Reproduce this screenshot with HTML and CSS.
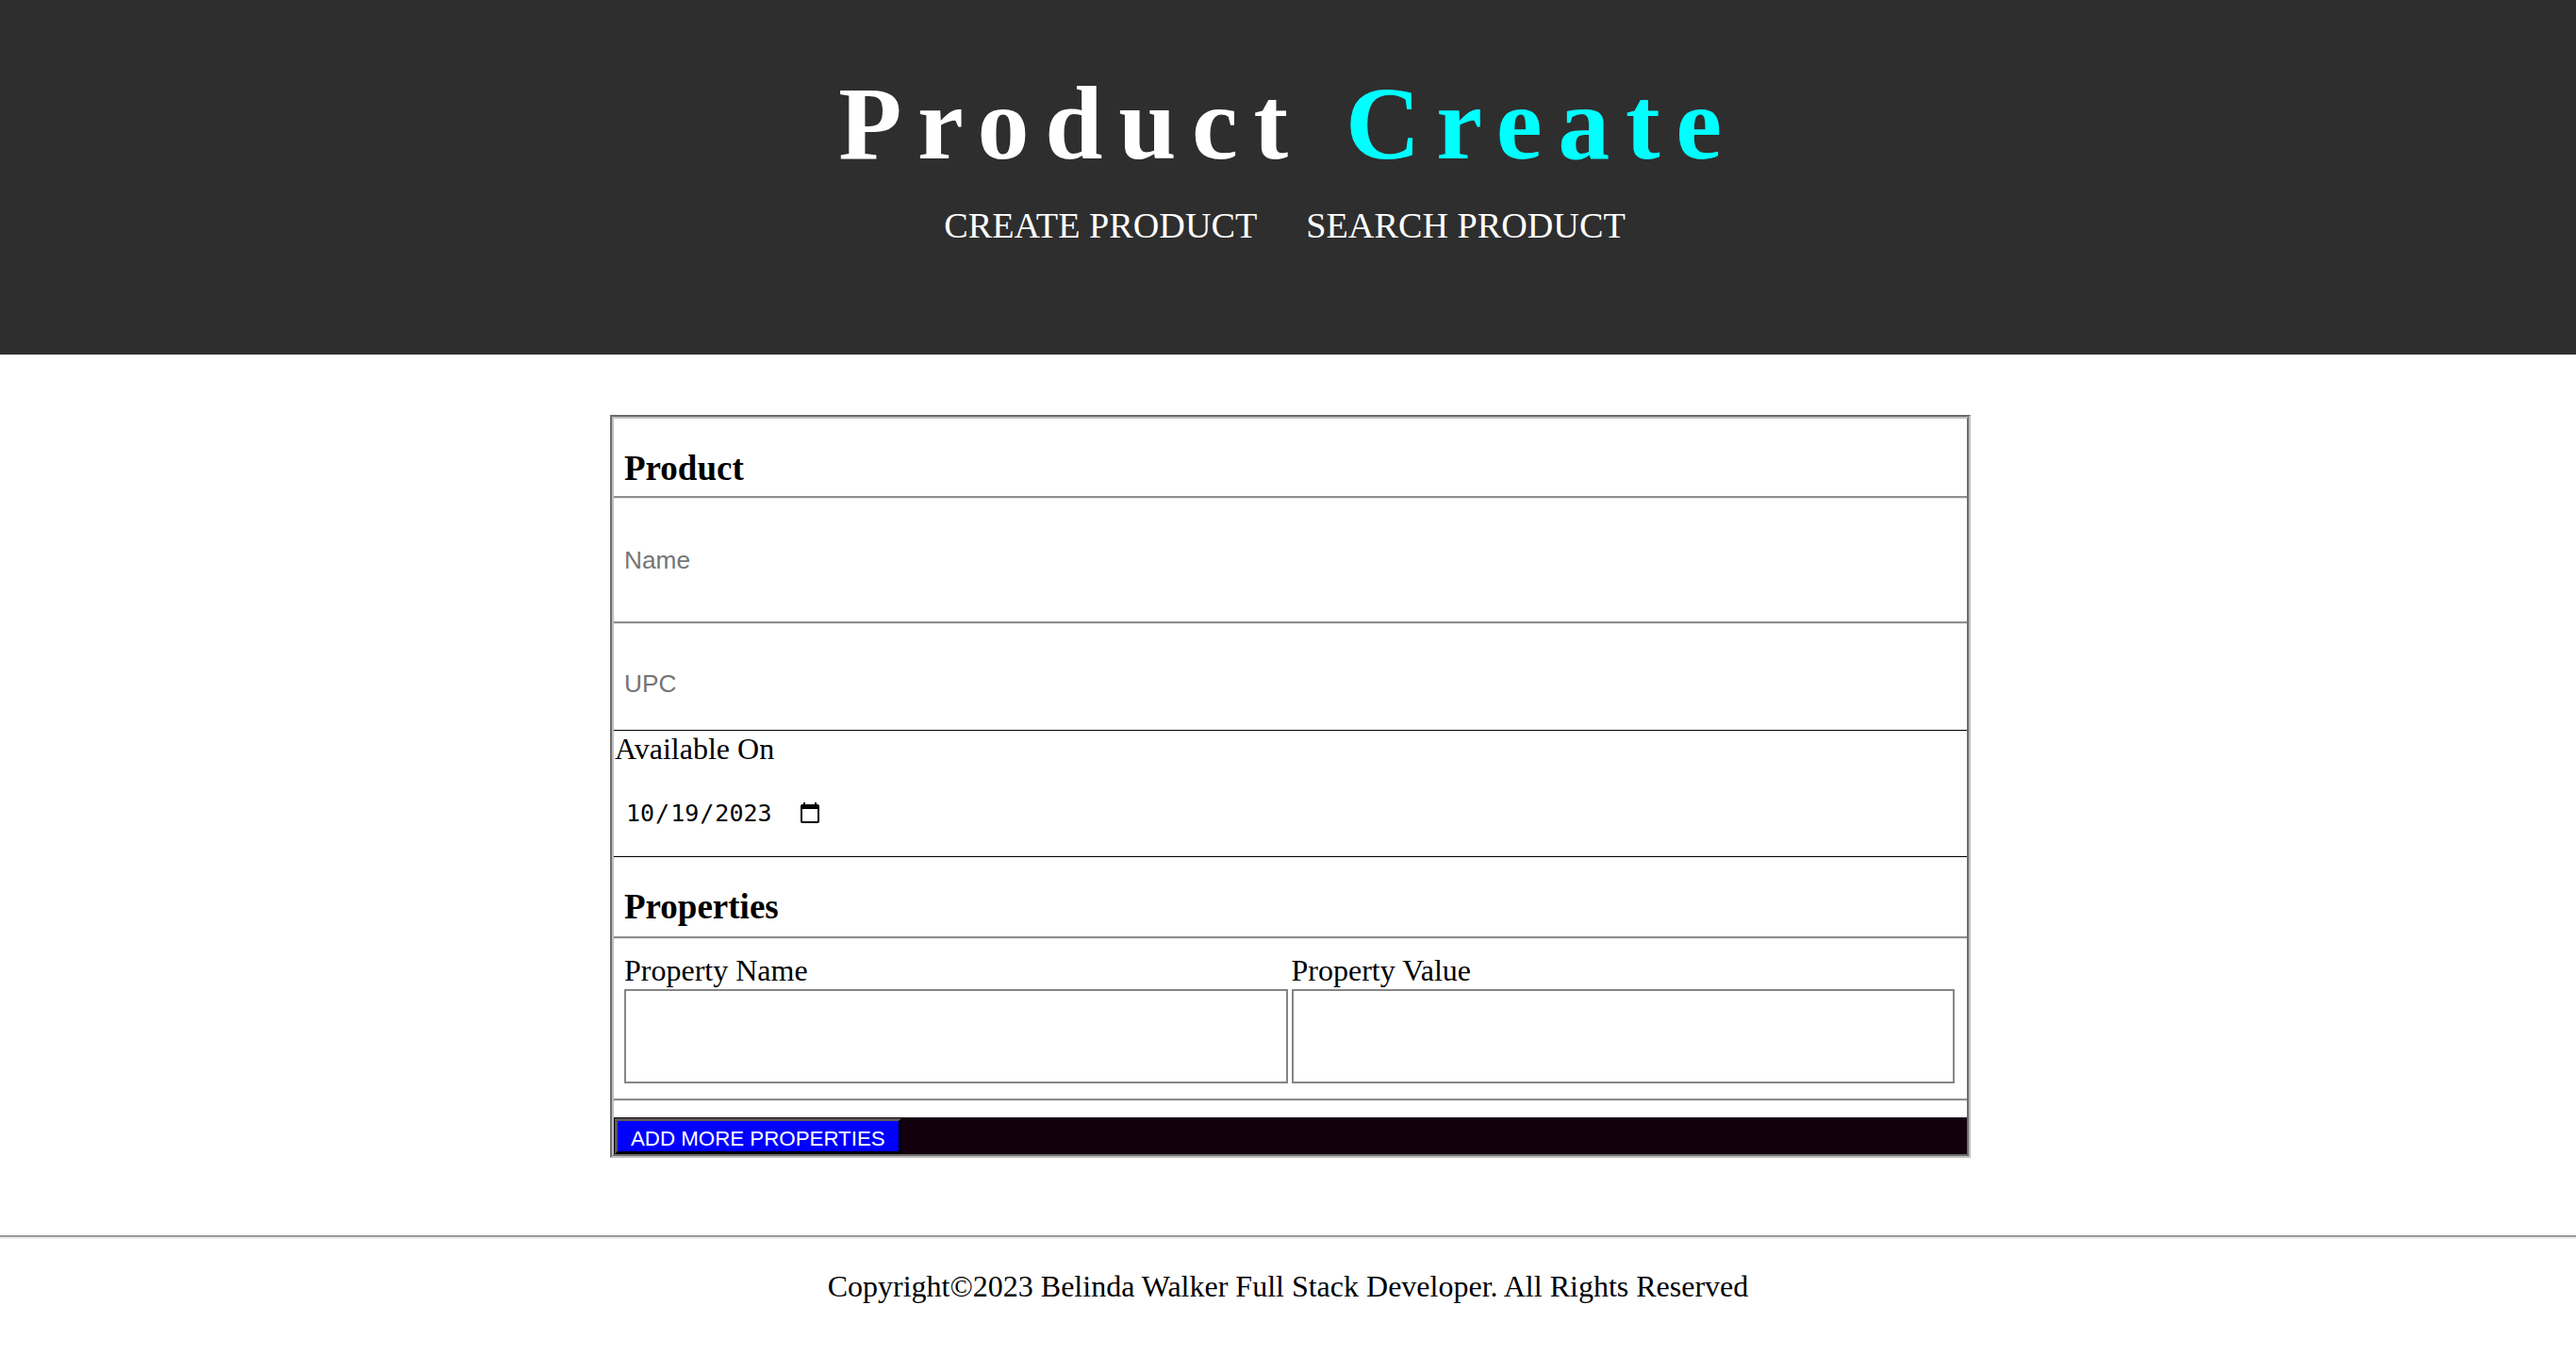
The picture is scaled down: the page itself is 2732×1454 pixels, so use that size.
FILE: index.html
```html
<!DOCTYPE html>
<html lang="en">
<head>
<meta charset="utf-8">
<title>Product Create</title>
<link rel="stylesheet" href="styles.css">
</head>
<body>
<header class="top">
  <h1 class="title">Product <span class="accent">Create</span></h1>
  <nav class="nav">
    <a class="nav-link" href="#">CREATE PRODUCT</a>
    <a class="nav-link" href="#">SEARCH PRODUCT</a>
  </nav>
</header>

<main class="main">
  <form class="product-form">
    <fieldset class="box">
      <h3 class="section-title product-title">Product</h3>
      <div class="rule"></div>
      <input class="field field-name" type="text" placeholder="Name">
      <div class="rule"></div>
      <input class="field field-upc" type="text" placeholder="UPC">
      <div class="date-block">
        <label class="date-label" for="avail">Available On</label>
        <div class="date-wrap">
          <input class="date-input" id="avail" type="date" value="2023-10-19">
        </div>
      </div>
      <h3 class="section-title props-title">Properties</h3>
      <div class="rule"></div>
      <div class="props">
        <div class="prop-col">
          <label class="prop-label">Property Name</label>
          <input class="prop-input" type="text">
        </div>
        <div class="prop-col">
          <label class="prop-label">Property Value</label>
          <input class="prop-input" type="text">
        </div>
      </div>
      <div class="rule"></div>
      <div class="action-bar">
        <button class="add-btn" type="button">ADD MORE PROPERTIES</button>
      </div>
    </fieldset>
  </form>
</main>

<footer class="footer">
  <hr class="footer-rule">
  <p class="copyright">Copyright©2023 Belinda Walker Full Stack Developer. All Rights Reserved</p>
</footer>
</body>
</html>
```

FILE: styles.css
```css
html, body {
  margin: 0;
  padding: 0;
  background: #ffffff;
}

body {
  font-family: "Liberation Serif", "Times New Roman", serif;
  font-size: 32px;
  color: #000;
}

.top {
  background: #2e2e2e;
  height: 376px;
  box-sizing: border-box;
  padding-top: 71px;
  text-align: center;
}

.title {
  margin: 0;
  font-size: 110px;
  line-height: 120px;
  font-weight: bold;
  letter-spacing: 16.7px;
  color: #ffffff;
}

.accent {
  color: #00ffff;
}

.nav {
  margin-top: 26px;
  padding-right: 7px;
  display: flex;
  justify-content: center;
  gap: 52px;
  line-height: 44px;
}

.nav-link {
  color: #ffffff;
  text-decoration: none;
  font-size: 38.2px;
}

.main {
  display: flex;
  justify-content: center;
  padding: 64px 0 0 5px;
}

.product-form {
  margin: 0;
}

.box {
  width: 1435px;
  margin: 0;
  padding: 0;
  border: 4px groove #c0c0c0;
  display: flex;
  flex-direction: column;
  min-inline-size: 0;
}

.section-title {
  margin: 0;
  font-size: 37px;
  font-weight: bold;
  line-height: 44px;
  padding-left: 11px;
}

.product-title {
  padding-top: 31px;
  padding-bottom: 7px;
}

.props-title {
  padding-top: 31px;
  padding-bottom: 9px;
}

.rule {
  border-top: 2px solid #8f8f8f;
  border-bottom: 1px solid #e8e8e8;
}

.field {
  display: block;
  box-sizing: border-box;
  width: 100%;
  margin: 0;
  border: none;
  outline: none;
  padding: 0 0 0 11px;
  font-family: "Liberation Sans", Arial, sans-serif;
  font-size: 26.25px;
  background: #fff;
}

.field::placeholder {
  color: #757575;
}

.field-name {
  height: 130px;
}

.field-upc {
  height: 112px;
  padding-top: 14px;
}

.date-block {
  border-top: 1px solid #000;
  border-bottom: 1px solid #000;
  height: 135px;
  box-sizing: border-box;
}

.date-label {
  display: block;
  line-height: 36px;
  padding: 1px 0 0 1px;
}

.date-wrap {
  padding: 30px 0 0 12px;
}

.date-input {
  font-family: "DejaVu Sans Mono", "Liberation Mono", monospace;
  font-size: 25px;
  border: none;
  padding: 0;
  margin: 0;
  background: transparent;
  color: #000;
}

.date-input::-webkit-calendar-picker-indicator {
  width: 26px;
  height: 26px;
  margin-left: -4px;
  padding: 0;
}

.props {
  display: grid;
  grid-template-columns: 1fr 1fr;
  column-gap: 4px;
  padding: 15px 13px 16px 11px;
}

.prop-col {
  display: flex;
  flex-direction: column;
}

.prop-label {
  line-height: 36px;
  margin-bottom: 2px;
}

.prop-input {
  box-sizing: border-box;
  height: 100px;
  width: 100%;
  margin: 0;
  border: 2px solid #858585;
  padding: 0;
  background: #fff;
}

.action-bar {
  margin-top: 17px;
  background: #13000f;
  height: 39px;
  display: flex;
  align-items: flex-end;
}

.add-btn {
  margin: 0 0 0 1px;
  height: 38px;
  padding: 6px 14px 0;
  background: #0000ff;
  color: #ffffff;
  font-family: "Liberation Sans", Arial, sans-serif;
  font-size: 22.3px;
  border-style: solid;
  border-width: 3px;
  border-color: #5a5a5a #000 #000 #5a5a5a;
  cursor: pointer;
}

.footer {
  margin-top: 82px;
}

.footer-rule {
  margin: 0;
  border: none;
  border-top: 2px solid #9a9a9a;
  border-bottom: 2px solid #eeeeee;
}

.copyright {
  margin: 0;
  padding-top: 32px;
  text-align: center;
  line-height: 36px;
}
```
